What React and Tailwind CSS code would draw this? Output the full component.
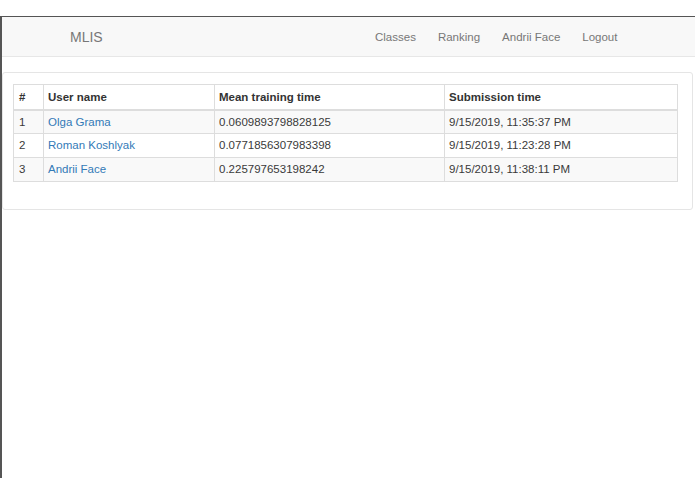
import React from 'react';

const rows = [
  { id: 1, name: 'Olga Grama', mean: '0.0609893798828125', time: '9/15/2019, 11:35:37 PM' },
  { id: 2, name: 'Roman Koshlyak', mean: '0.0771856307983398', time: '9/15/2019, 11:23:28 PM' },
  { id: 3, name: 'Andrii Face', mean: '0.225797653198242', time: '9/15/2019, 11:38:11 PM' },
];

export default function App() {
  return (
    <div className="bg-white min-h-screen pt-[16px] font-['Liberation_Sans',Arial,sans-serif] text-[#333]">
      <div className="h-[462px] border-t-[1.5px] border-l-2 border-[#555]">
        {/* Navbar */}
        <nav className="h-[40px] pt-[2px] bg-[#f8f8f8] border-b border-[#e7e7e7] flex items-center text-[#777]">
          <div className="pl-[68px] text-[14px] w-[373px]">MLIS</div>
          <div className="flex items-center text-[11.5px] gap-[22px]">
            <span>Classes</span>
            <span>Ranking</span>
            <span>Andrii Face</span>
            <span>Logout</span>
          </div>
        </nav>

        {/* Panel */}
        <div className="mt-[15px] mr-[2px] border border-[#e5e5e5] rounded-[3px] pt-[11px] pb-[27px] pl-[10px] pr-[14px]">
          <table className="w-full border-collapse text-[11.5px]">
            <thead>
              <tr className="h-[25px]">
                <th className="w-[30px] text-left font-bold px-[5px] pt-[2px] border border-[#ddd] border-b-2">#</th>
                <th className="w-[171px] text-left font-bold px-[4px] pt-[2px] border border-[#ddd] border-b-2">User name</th>
                <th className="w-[230px] text-left font-bold px-[4px] pt-[2px] border border-[#ddd] border-b-2">Mean training time</th>
                <th className="text-left font-bold px-[4px] pt-[2px] border border-[#ddd] border-b-2">Submission time</th>
              </tr>
            </thead>
            <tbody className="text-[#3a3a3a]">
              {rows.map((r, i) => (
                <tr key={r.id} className={`h-[24px] ${i % 2 === 0 ? 'bg-[#f9f9f9]' : 'bg-white'}`}>
                  <td className="px-[5px] pt-[1px] border border-[#ddd]">{r.id}</td>
                  <td className="px-[4px] pt-[1px] border border-[#ddd] text-[#337ab7]">{r.name}</td>
                  <td className="px-[4px] pt-[1px] border border-[#ddd]">{r.mean}</td>
                  <td className="px-[4px] pt-[1px] border border-[#ddd]">{r.time}</td>
                </tr>
              ))}
            </tbody>
          </table>
        </div>
      </div>
    </div>
  );
}
